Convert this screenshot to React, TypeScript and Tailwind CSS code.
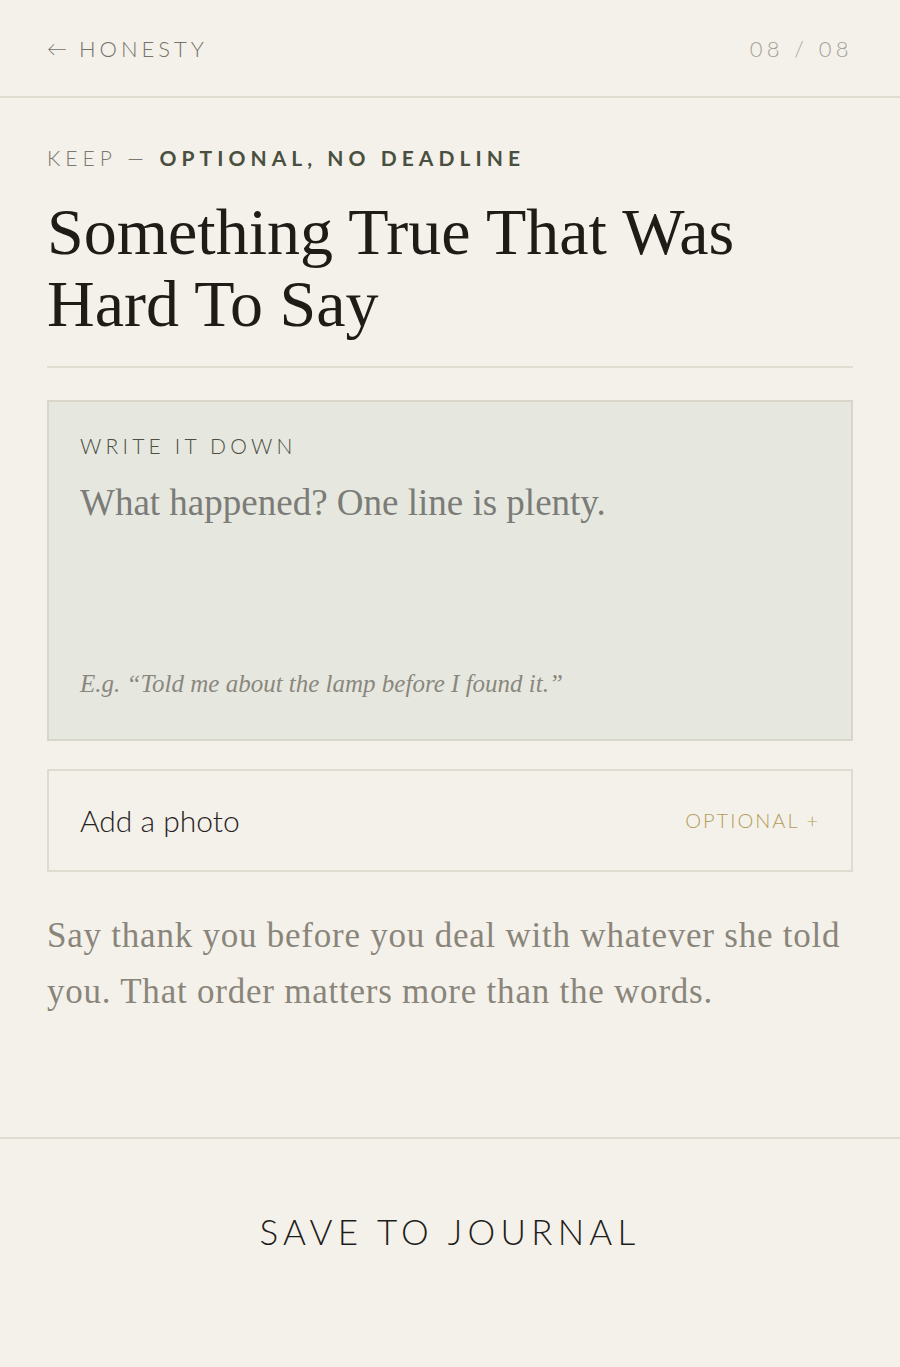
// Journal "keep" prompt: header, prompt title, write-it-down card,
// optional photo row, a note, and the save action pinned under a rule.

const serif = "font-['Liberation_Serif','Times_New_Roman',serif]";
const sans = "font-['Lato','Noto_Sans',sans-serif]";

export default function App() {
  return (
    <div className={`flex min-h-[1367px] w-full flex-col bg-[#f4f1ea] ${sans}`}>
      <header className="flex h-[98px] items-center justify-between border-b-2 border-[#dedbd0] px-[47px]">
        <button type="button" className="flex items-center gap-3 text-[22px] font-light tracking-[0.18em] text-[#77736a]">
          <span className="text-[20px] tracking-normal">←</span>
          HONESTY
        </button>
        <span className="text-[22px] font-light tracking-[0.2em] text-[#a6a297]">08 / 08</span>
      </header>

      <main className="flex flex-1 flex-col px-[47px] pt-[44px]">
        <p className="text-[21px] tracking-[0.24em] text-[#7c786e]">
          <span className="font-light">KEEP — </span>
          <span className="font-bold text-[#4a5040]">OPTIONAL, NO DEADLINE</span>
        </p>

        <h1 className={`${serif} mt-[22px] text-[66px] leading-[72px] text-[#1f1c18]`}>
          Something True That Was
          <br />
          Hard To Say
        </h1>

        <div className="mt-[26px] h-[2px] bg-[#e0ddd2]" />

        <section className="mt-[32px] flex h-[341px] flex-col border-2 border-[#d8d6ca] bg-[#e6e7df] px-[31px] pt-[28px] pb-[36px]">
          <p className="text-[21px] font-light tracking-[0.2em] text-[#4c5043]">WRITE IT DOWN</p>
          <p className={`${serif} mt-[14px] text-[37px] text-[#7b7b77]`}>What happened? One line is plenty.</p>
          <p className={`${serif} mt-auto text-[25px] italic text-[#8a877e]`}>
            E.g. “Told me about the lamp before I found it.”
          </p>
        </section>

        <button
          type="button"
          className="mt-[28px] flex h-[103px] items-center justify-between border-2 border-[#dedbd0] px-[31px]"
        >
          <span className="text-[30px] font-light text-[#27241f]">Add a photo</span>
          <span className="text-[20px] font-light tracking-[0.1em] text-[#b39c5c]">OPTIONAL +</span>
        </button>

        <p className={`${serif} mt-[36px] text-[35px] leading-[56px] tracking-[0.022em] text-[#8a857a]`}>
          Say thank you before you deal with whatever she told you. That order matters more than the words.
        </p>
      </main>

      <footer className="mt-[117px] flex h-[231px] items-start justify-center border-t-2 border-[#dedbd0] pt-[66px]">
        <button type="button" className="text-[35px] font-light tracking-[0.15em] text-[#1f1d1a]">
          SAVE TO JOURNAL
        </button>
      </footer>
    </div>
  );
}
